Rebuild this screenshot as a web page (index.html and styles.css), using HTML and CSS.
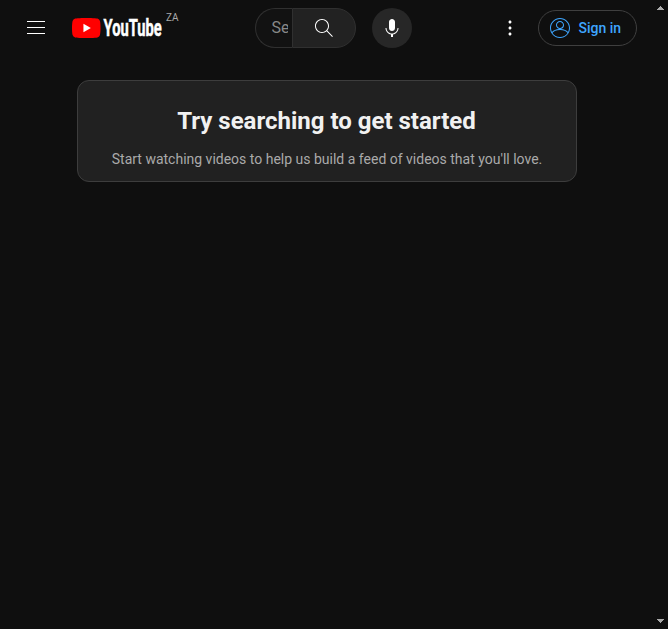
FILE: index.html
```html
<!DOCTYPE html>
<html lang="en">
<head>
<meta charset="utf-8">
<title>YouTube</title>
<link rel="stylesheet" href="styles.css">
</head>
<body>
<div class="page">
  <header class="masthead">
    <div class="start">
      <svg class="icon" viewBox="0 0 24 24"><path d="M21 6H3V5h18v1zm0 5H3v1h18v-1zm0 6H3v1h18v-1z"/></svg>
      <a class="logo">
        <svg class="brand" viewBox="0 0 90 20">
          <path fill="#f00" d="M27.97 3.12A3.58 3.58 0 0 0 25.45.6C23.22 0 14.29 0 14.29 0S5.35 0 3.12.6A3.58 3.58 0 0 0 .6 3.12C0 5.35 0 10 0 10s0 4.65.6 6.88a3.58 3.58 0 0 0 2.52 2.52c2.23.6 11.17.6 11.17.6s8.93 0 11.16-.6a3.58 3.58 0 0 0 2.52-2.52c.6-2.23.6-6.88.6-6.88s0-4.65-.6-6.88z"/>
          <path fill="#fff" d="M11.43 14.29 18.85 10l-7.42-4.28z"/>
          <text class="wordmark" x="31.5" y="18.3" textLength="58.2" lengthAdjust="spacingAndGlyphs">YouTube</text>
        </svg>
        <span class="country">ZA</span>
      </a>
    </div>
    <div class="center">
      <div class="search">
        <div class="field"><span class="placeholder">Search</span></div>
        <div class="search-button">
          <svg class="icon" viewBox="0 0 24 24"><path d="m20.87 20.17-5.59-5.59C16.35 13.35 17 11.75 17 10c0-3.87-3.13-7-7-7s-7 3.13-7 7 3.13 7 7 7c1.75 0 3.35-.65 4.58-1.71l5.59 5.59.7-.71zM10 16c-3.31 0-6-2.69-6-6s2.69-6 6-6 6 2.69 6 6-2.69 6-6 6z"/></svg>
        </div>
      </div>
      <div class="mic">
        <svg class="icon" viewBox="0 0 24 24"><path d="M12 3c-1.66 0-3 1.37-3 3.07v5.86c0 1.7 1.34 3.07 3 3.07s3-1.37 3-3.07V6.07C15 4.37 13.66 3 12 3zM18.5 12h-1c0 3.03-2.47 5.5-5.5 5.5S6.5 15.03 6.5 12h-1c0 3.24 2.39 5.93 5.5 6.41V21h2v-2.59c3.11-.48 5.5-3.17 5.5-6.41z"/></svg>
      </div>
    </div>
    <div class="end">
      <svg class="icon" viewBox="0 0 24 24"><path d="M12 16.5c.83 0 1.5.67 1.5 1.5s-.67 1.5-1.5 1.5-1.5-.67-1.5-1.5.67-1.5 1.5-1.5zM10.5 12c0 .83.67 1.5 1.5 1.5s1.5-.67 1.5-1.5-.67-1.5-1.5-1.5-1.5.67-1.5 1.5zm0-6c0 .83.67 1.5 1.5 1.5s1.5-.67 1.5-1.5-.67-1.5-1.5-1.5-1.5.67-1.5 1.5z"/></svg>
      <a class="sign-in">
        <svg class="avatar" viewBox="0 0 24 24"><path d="M12 2C6.48 2 2 6.48 2 12s4.48 10 10 10 10-4.480 10-10S17.52 2 12 2zM12 3c4.96 0 9 4.040 9 9 0 1.420-.34 2.760-.93 3.960-1.530-1.720-3.980-2.890-7.380-3.030A3.990 3.990 0 0 0 16 9c0-2.210-1.790-4-4-4S8 6.790 8 9c0 1.970 1.430 3.600 3.310 3.930-3.400.14-5.850 1.310-7.380 3.030C3.340 14.760 3 13.420 3 12c0-4.960 4.040-9 9-9zM9 9c0-1.650 1.350-3 3-3s3 1.350 3 3-1.350 3-3 3-3-1.350-3-3zm3 12c-3.160 0-5.940-1.640-7.550-4.120C5.850 15.090 8.240 13.900 12 13.900s6.150 1.190 7.550 2.980C17.940 19.360 15.160 21 12 21z"/></svg>
        <span>Sign in</span>
      </a>
    </div>
  </header>
  <main class="content">
    <section class="nudge">
      <h1>Try searching to get started</h1>
      <p>Start watching videos to help us build a feed of videos that you'll love.</p>
    </section>
  </main>
</div>
<div class="scrollbar">
  <svg class="arrow" viewBox="0 0 7 4" shape-rendering="crispEdges"><path d="M3 0h1v1h1v1h1v1h1v1H0V3h1V2h1V1h1z"/></svg>
  <svg class="arrow" viewBox="0 0 7 4" shape-rendering="crispEdges"><path d="M0 0h7v1H6v1H5v1H4v1H3V3H2V2H1V1H0z"/></svg>
</div>
</body>
</html>
```
FILE: styles.css
```css
* { box-sizing: border-box; }
body {
  margin: 0;
  height: 629px;
  display: flex;
  overflow: hidden;
  background: #0f0f0f;
  color: #f1f1f1;
  font-family: Roboto, Arial, sans-serif;
}
.page { flex: 1; }
.masthead {
  height: 56px;
  padding: 0 16px 0 24px;
  display: flex;
  align-items: center;
}
.start { display: flex; align-items: center; gap: 24px; width: 231px; }
.icon { display: block; width: 24px; height: 24px; fill: #fff; flex: none; }
.logo { display: flex; align-items: flex-start; gap: 4px; height: 56px; padding-top: 18px; }
.brand { display: block; width: 90px; height: 20px; overflow: visible; }
.wordmark { fill: #fff; stroke: #fff; stroke-width: 0.5px; font-size: 23.5px; font-weight: 700; }
.country { margin-top: -6px; font-size: 10px; line-height: 11px; color: #aaa; }
.center { display: flex; gap: 16px; }
.search { display: flex; width: 101px; height: 40px; }
.field {
  width: 37px;
  padding: 0 4px 0 15.5px;
  display: flex;
  align-items: center;
  border: 1px solid #303030;
  border-right: 0;
  border-radius: 40px 0 0 40px;
  background: #121212;
}
.placeholder { overflow: hidden; font-size: 16px; line-height: 24px; color: #888; }
.search-button {
  width: 64px;
  display: flex;
  align-items: center;
  justify-content: center;
  border: 1px solid #303030;
  border-radius: 0 40px 40px 0;
  background: #222;
}
.mic {
  width: 40px;
  height: 40px;
  display: flex;
  align-items: center;
  justify-content: center;
  border-radius: 50%;
  background: #272727;
}
.end { margin-left: auto; display: flex; align-items: center; gap: 16px; }
.sign-in {
  width: 99px;
  height: 36px;
  padding-left: 9px;
  display: flex;
  align-items: center;
  gap: 6.5px;
  border: 1px solid #3f3f3f;
  border-radius: 18px;
  color: #3ea6ff;
  font-size: 14px;
  font-weight: 500;
  white-space: nowrap;
}
.avatar { width: 24px; height: 24px; fill: #3ea6ff; flex: none; }
.content { padding-top: 24px; }
.nudge {
  width: 500px;
  height: 102px;
  margin: 0 auto;
  padding-top: 23px;
  border: 1px solid #3d3d3d;
  border-radius: 12px;
  background: #212121;
  text-align: center;
}
h1 { margin: 0; font-size: 24px; line-height: 34px; font-weight: 700; }
p { margin: 11px 0 0; padding-left: 1px; font-size: 14px; line-height: 20px; color: #aaa; }
.scrollbar {
  width: 15px;
  padding: 6px 4px;
  display: flex;
  flex-direction: column;
  justify-content: space-between;
}
.arrow { display: block; width: 7px; height: 4px; fill: #aaa; }
```
